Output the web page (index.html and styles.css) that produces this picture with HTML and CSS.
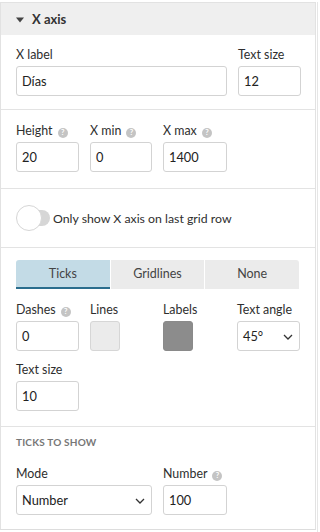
FILE: index.html
```html
<!DOCTYPE html>
<html>
<head>
<meta charset="utf-8">
<link rel="stylesheet" href="styles.css">
</head>
<body>
<div class="frame">
  <div class="panel">
    <div class="header">
      <svg class="caret" width="8" height="6" viewBox="0 0 8 6"><path d="M0 0.5 H8 L4 5.5 Z" fill="#444"/></svg>
      <span class="title">X axis</span>
    </div>

    <div class="section s1">
      <div class="row">
        <div class="field w211">
          <div class="label">X label</div>
          <div class="input">Días</div>
        </div>
        <div class="field w63">
          <div class="label">Text size</div>
          <div class="input">12</div>
        </div>
      </div>
    </div>

    <div class="section s2">
      <div class="row">
        <div class="field w63">
          <div class="label">Height <span class="help">?</span></div>
          <div class="input">20</div>
        </div>
        <div class="field w62">
          <div class="label">X min <span class="help">?</span></div>
          <div class="input">0</div>
        </div>
        <div class="field w64">
          <div class="label">X max <span class="help">?</span></div>
          <div class="input">1400</div>
        </div>
      </div>
    </div>

    <div class="section s3">
      <div class="toggle-row">
        <div class="toggle"><span class="track"></span><span class="knob"></span></div>
        <span class="toggle-text">Only show X axis on last grid row</span>
      </div>
    </div>

    <div class="section s4">
      <div class="tabs">
        <div class="tab active">Ticks</div>
        <div class="tab">Gridlines</div>
        <div class="tab">None</div>
      </div>
      <div class="row r-ticks">
        <div class="field w63">
          <div class="label">Dashes <span class="help">?</span></div>
          <div class="input">0</div>
        </div>
        <div class="field w62">
          <div class="label">Lines</div>
          <div class="swatch light"></div>
        </div>
        <div class="field w63">
          <div class="label">Labels</div>
          <div class="swatch dark"></div>
        </div>
        <div class="field w63">
          <div class="label">Text angle</div>
          <div class="input select">45°
            <svg class="chev" width="10" height="6" viewBox="0 0 10 6"><path d="M1 1 L5 5 L9 1" fill="none" stroke="#333" stroke-width="1.3"/></svg>
          </div>
        </div>
      </div>
      <div class="row r-size">
        <div class="field w63">
          <div class="label">Text size</div>
          <div class="input">10</div>
        </div>
      </div>
    </div>

    <div class="section s5">
      <div class="subhead">TICKS TO SHOW</div>
      <div class="row">
        <div class="field w136">
          <div class="label">Mode</div>
          <div class="input select">Number
            <svg class="chev" width="10" height="6" viewBox="0 0 10 6"><path d="M1 1 L5 5 L9 1" fill="none" stroke="#333" stroke-width="1.3"/></svg>
          </div>
        </div>
        <div class="field w64">
          <div class="label">Number <span class="help">?</span></div>
          <div class="input">100</div>
        </div>
      </div>
    </div>
  </div>
  <div class="edge"></div>
</div>
</body>
</html>
```

FILE: styles.css
```css
* { box-sizing: border-box; }
html, body { margin: 0; padding: 0; background: #fff; }
body {
  font-family: Lato, "Open Sans", sans-serif;
  color: #333;
  font-size: 12px;
}
.frame {
  display: flex;
  width: 320px;
  height: 532px;
  padding-top: 2px;
}
.panel {
  width: 316px;
  border: 1px solid #e2e2e2;
  border-bottom-color: #ddd;
  height: 528px;
}
.edge {
  width: 4px;
  border-left: 1px solid #e6e6e6;
  margin-left: 1px;
}
.header {
  height: 32px;
  background: #efefef;
  display: flex;
  align-items: center;
  padding-left: 15px;
  gap: 8px;
}
.title { font-weight: 700; font-size: 13px; color: #333; }
.caret { margin-top: 1px; }
.section {
  border-bottom: 1px solid #e3e3e3;
  padding: 0 16px 0 15px;
}
.row { display: flex; gap: 11px; }
.field { display: flex; flex-direction: column; flex: none; }
.w62 { width: 62px; }
.w63 { width: 63px; }
.w64 { width: 64px; }
.w136 { width: 136px; }
.w211 { width: 211px; }
.label {
  height: 18px;
  line-height: 18px;
  margin-bottom: 2px;
  font-size: 12.4px;
  color: #2e2e2e;
  white-space: nowrap;
}
.help {
  display: inline-block;
  width: 10px;
  height: 10px;
  border-radius: 50%;
  background: #c4c4c4;
  color: #fff;
  font-size: 7.5px;
  line-height: 10px;
  text-align: center;
  font-weight: 700;
  vertical-align: 0px;
  margin-left: 2px;
}
.input {
  height: 30px;
  border: 1px solid #d3d3d3;
  border-radius: 3px;
  padding: 0 5px;
  line-height: 28px;
  font-size: 12.8px;
  color: #222;
  background: #fff;
  position: relative;
}
.s1 { padding-top: 11px; height: 75px; }
.s2 { padding-top: 12px; height: 79px; }
.s3 { height: 59px; display: flex; align-items: center; }
.toggle-row { display: flex; align-items: center; gap: 3px; }
.toggle { position: relative; width: 34px; height: 26px; }
.track {
  position: absolute; left: 12px; top: 5px;
  width: 22px; height: 16px; border-radius: 8px;
  background: #d6d6d6;
}
.knob {
  position: absolute; left: 0; top: 0;
  width: 26px; height: 26px; border-radius: 50%;
  background: #fff; border: 1px solid #d6d6d6;
}
.toggle-text { font-size: 12.3px; color: #2e2e2e; }
.s4 { padding-top: 12px; height: 179px; }
.tabs { display: flex; width: 283px; height: 29px; gap: 1px; }
.tab {
  flex: 1;
  background: #ebebeb;
  text-align: center;
  line-height: 27px;
  font-size: 12.5px;
  color: #444;
  border-bottom: 2px solid transparent;
}
.tab:first-child { border-top-left-radius: 3px; }
.tab:last-child { border-top-right-radius: 3px; }
.tab.active { background: #c3dbe6; border-bottom-color: #2a6d8d; }
.r-ticks { margin-top: 12px; }
.r-size { margin-top: 10px; }
.swatch {
  width: 30px; height: 30px; border-radius: 3px;
  border: 1px solid #d6d6d6;
}
.swatch.light { background: #ebebeb; }
.swatch.dark { background: #8c8c8c; border-color: #8a8a8a; }
.select { padding-right: 20px; }
.chev { position: absolute; right: 6px; top: 12px; }
.s5 { padding-top: 7px; height: 101px; border-bottom: none; }
.subhead {
  font-size: 10px;
  font-weight: 700;
  color: #777;
  letter-spacing: 0.2px;
  height: 16px;
  line-height: 16px;
  margin-bottom: 15px;
}
```
